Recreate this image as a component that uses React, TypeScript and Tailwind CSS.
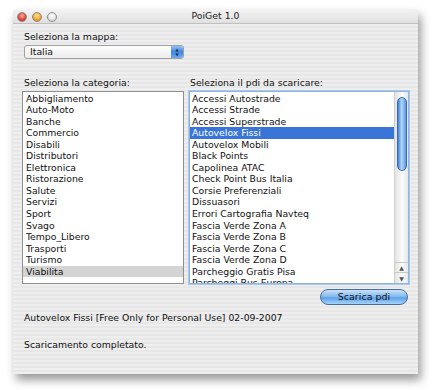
const categories = [
  "Abbigliamento",
  "Auto-Moto",
  "Banche",
  "Commercio",
  "Disabili",
  "Distributori",
  "Elettronica",
  "Ristorazione",
  "Salute",
  "Servizi",
  "Sport",
  "Svago",
  "Tempo_Libero",
  "Trasporti",
  "Turismo",
  "Viabilita",
]

const pdis = [
  "Accessi Autostrade",
  "Accessi Strade",
  "Accessi Superstrade",
  "Autovelox Fissi",
  "Autovelox Mobili",
  "Black Points",
  "Capolinea ATAC",
  "Check Point Bus Italia",
  "Corsie Preferenziali",
  "Dissuasori",
  "Errori Cartografia Navteq",
  "Fascia Verde Zona A",
  "Fascia Verde Zona B",
  "Fascia Verde Zona C",
  "Fascia Verde Zona D",
  "Parcheggio Gratis Pisa",
  "Parcheggi Bus Europa",
]

function Light({ color }: { color: string }) {
  return (
    <span
      className={`w-[10px] h-[10px] rounded-full border border-[#8a8a8a] ${color}`}
    />
  )
}

function ScrollBar() {
  return (
    <div className="w-[14px] h-full flex flex-col bg-[linear-gradient(90deg,#e2e2e2,#fbfbfb_55%,#e6e6e6)] border-l border-[#d0d0d0]">
      <div className="mx-auto mt-[5px] w-[10px] h-[74px] rounded-full border border-[#3a6cb6] bg-[linear-gradient(90deg,#3f7fd6,#b3d8fa_45%,#5896e4)]" />
      <div className="flex-1" />
      <div className="h-[10px] flex items-center justify-center text-[6px] text-[#555] border-t border-[#c8c8c8]">
        ▲
      </div>
      <div className="h-[11px] flex items-center justify-center text-[6px] text-[#555] border-t border-[#c8c8c8]">
        ▼
      </div>
    </div>
  )
}

export default function App() {
  return (
    <div className="w-[435px] h-[390px] bg-white pt-[9px] pl-[13px] font-['DejaVu_Sans',sans-serif] text-[9.3px] text-[#111]">
      <div className="w-[405px] h-[365px] flex flex-col bg-[#ececec] shadow-[3px_6px_10px_rgba(0,0,0,0.4)] rounded-t-[4px] overflow-hidden">
        <div className="h-[15px] relative flex items-center bg-[linear-gradient(#f4f4f4,#e0e0e0)] border-b border-[#c0c0c0]">
          <div className="flex gap-[5px] pl-[4px] pt-[1px]">
            <Light color="bg-[radial-gradient(circle_at_50%_35%,#ffb0a0,#e0402e_60%,#b01c10)]" />
            <Light color="bg-[radial-gradient(circle_at_50%_35%,#ffe6a0,#f2a323_60%,#c67a0a)]" />
            <Light color="bg-[radial-gradient(circle_at_50%_35%,#ffffff,#e2e2e2_60%,#c4c4c4)]" />
          </div>
          <div className="absolute inset-0 flex items-center justify-center text-[#222]">
            PoiGet 1.0
          </div>
        </div>

        <div className="flex-1 flex flex-col px-[9px] bg-[repeating-linear-gradient(#eeeeee_0px,#eeeeee_2px,#e7e7e7_2px,#e7e7e7_4px)]">
          <div className="mt-[7px] pl-[2px] h-[12px] leading-[12px]">Seleziona la mappa:</div>
          <div className="mt-[2px] ml-[2px] w-[160px] h-[14px] flex items-center rounded-[3px] border border-[#a0a0a0] bg-[linear-gradient(#ffffff,#ececec)]">
            <span className="flex-1 pl-[5px] leading-[12px]">Italia</span>
            <span className="w-[12px] h-full rounded-r-[3px] bg-[linear-gradient(#8ec0f3,#3f86e0_50%,#6aaaf0)] flex flex-col items-center justify-center text-[4px] leading-[5px] text-[#1a2a4a]">
              <span>▲</span>
              <span>▼</span>
            </span>
          </div>

          <div className="mt-[18px] flex gap-[5px] h-[12px] leading-[12px]">
            <div className="w-[162px] pl-[2px]">Seleziona la categoria:</div>
            <div className="pl-[1px]">Seleziona il pdi da scaricare:</div>
          </div>

          <div className="mt-[2px] flex gap-[5px] h-[193px]">
            <div className="w-[162px] h-full border border-[#8f8f8f] bg-white pt-[0.5px] overflow-hidden">
              {categories.map((c) => (
                <div
                  key={c}
                  className={`h-[11.55px] leading-[11.55px] pl-[3px] ${c === "Viabilita" ? "bg-[#d4d4d4]" : ""}`}
                >
                  {c}
                </div>
              ))}
            </div>
            <div className="w-[220px] h-full flex border border-[#8fb4e2] bg-white overflow-hidden shadow-[0_0_0_1px_#a8c8ee]">
              <div className="flex-1 overflow-hidden pt-[0.5px]">
                {pdis.map((p) => (
                  <div
                    key={p}
                    className={`h-[11.55px] leading-[11.55px] pl-[2px] whitespace-nowrap ${p === "Autovelox Fissi" ? "bg-[#3875d7] text-white" : ""}`}
                  >
                    {p}
                  </div>
                ))}
              </div>
              <ScrollBar />
            </div>
          </div>

          <div className="mt-[5px] flex justify-end pr-[1px]">
            <button className="w-[88px] h-[16px] rounded-full border border-[#4a6c98] bg-[linear-gradient(#c8e2fb,#7fb6ee_50%,#5aa0ea_55%,#a6d4fb)] text-[9.5px] leading-[14px] text-[#111]">
              Scarica pdi
            </button>
          </div>

          <div className="mt-[7px] pl-[2px] h-[12px] leading-[12px]">
            Autovelox Fissi [Free Only for Personal Use] 02-09-2007
          </div>
          <div className="mt-[15px] pl-[2px] h-[12px] leading-[12px]">Scaricamento completato.</div>
        </div>
      </div>
    </div>
  )
}
